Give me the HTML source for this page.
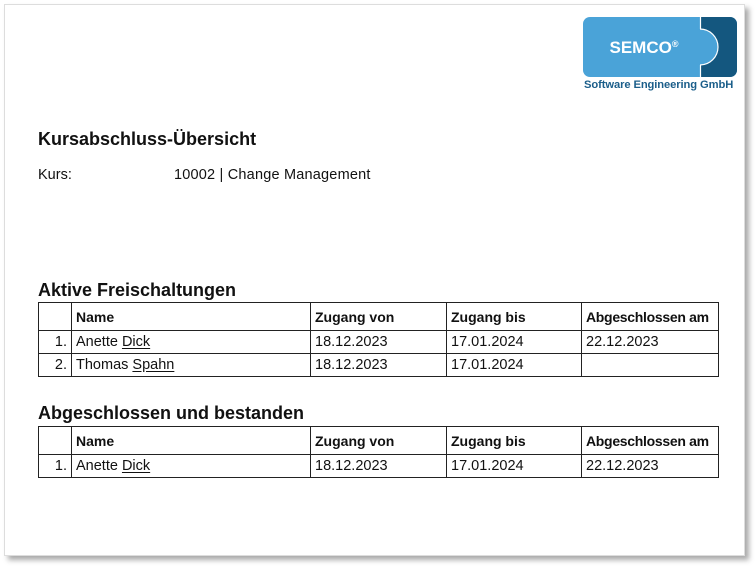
<!DOCTYPE html>
<html><head><meta charset="utf-8"><style>
body{margin:0;width:756px;height:568px;background:#fff;font-family:"Liberation Sans",sans-serif;color:#111;position:relative;overflow:hidden}
.page{position:absolute;left:4px;top:4px;width:739px;height:550px;background:#fff;border:1px solid #ddd;box-shadow:4px 4px 5px #aaa}
.a{position:absolute}
table{position:absolute;left:38px;border-collapse:collapse;font-size:14px}
td{border:1px solid #222;padding:0 4px;height:22px;white-space:nowrap}
tr.h td{font-weight:bold;height:27px;padding-top:0;vertical-align:middle}
tr.r td{font-size:14.5px}
u{text-underline-offset:2px}
</style></head><body>
<div class="page"></div>
<svg class="a" style="left:582px;top:16px" width="157" height="63">
<rect x="1" y="1" width="154" height="60" rx="7" fill="#4aa3d8"/>
<path d="M118 1 H148 a7 7 0 0 1 7 7 V54 a7 7 0 0 1 -7 7 H118 Z" fill="#14577f"/>
<path d="M118 13 a18 18 0 0 1 0 36" fill="#4aa3d8" stroke="#fff" stroke-width="1.2"/>
<rect x="112" y="13" width="6" height="36" fill="#4aa3d8"/>
<line x1="118.5" y1="1" x2="118.5" y2="13" stroke="#fff" stroke-width="1.2"/>
<line x1="118.5" y1="49" x2="118.5" y2="61" stroke="#fff" stroke-width="1.2"/>
<text x="62" y="37" text-anchor="middle" fill="#fff" font-family="Liberation Sans" font-weight="bold" font-size="17">SEMCO<tspan font-size="9" dy="-6">®</tspan></text>
</svg>
<div class="a" style="left:584px;top:79px;font-size:11.2px;font-weight:bold;color:#1b5e8a;letter-spacing:-0.1px">Software Engineering GmbH</div>
<div class="a" style="left:38px;top:129px;font-size:18px;font-weight:bold">Kursabschluss-Übersicht</div>
<div class="a" style="left:38px;top:167px;font-size:14.5px">Kurs:</div>
<div class="a" style="left:174px;top:167px;font-size:14.5px;letter-spacing:0.2px">10002 | Change Management</div>
<div class="a" style="left:38px;top:280px;font-size:18px;font-weight:bold">Aktive Freischaltungen</div>
<table style="top:302px">
<colgroup><col style="width:33px"><col style="width:239px"><col style="width:136px"><col style="width:135px"><col style="width:137px"></colgroup>
<tr class="h"><td></td><td>Name</td><td>Zugang von</td><td>Zugang bis</td><td style="letter-spacing:-0.3px">Abgeschlossen am</td></tr>
<tr class="r"><td style="text-align:right">1.</td><td>Anette <u>Dick</u></td><td>18.12.2023</td><td>17.01.2024</td><td>22.12.2023</td></tr>
<tr class="r"><td style="text-align:right">2.</td><td>Thomas <u>Spahn</u></td><td>18.12.2023</td><td>17.01.2024</td><td></td></tr>
</table>
<div class="a" style="left:38px;top:403px;font-size:18px;font-weight:bold">Abgeschlossen und bestanden</div>
<table style="top:426px">
<colgroup><col style="width:33px"><col style="width:239px"><col style="width:136px"><col style="width:135px"><col style="width:137px"></colgroup>
<tr class="h"><td></td><td>Name</td><td>Zugang von</td><td>Zugang bis</td><td style="letter-spacing:-0.3px">Abgeschlossen am</td></tr>
<tr class="r"><td style="text-align:right">1.</td><td>Anette <u>Dick</u></td><td>18.12.2023</td><td>17.01.2024</td><td>22.12.2023</td></tr>
</table>
</body></html>
